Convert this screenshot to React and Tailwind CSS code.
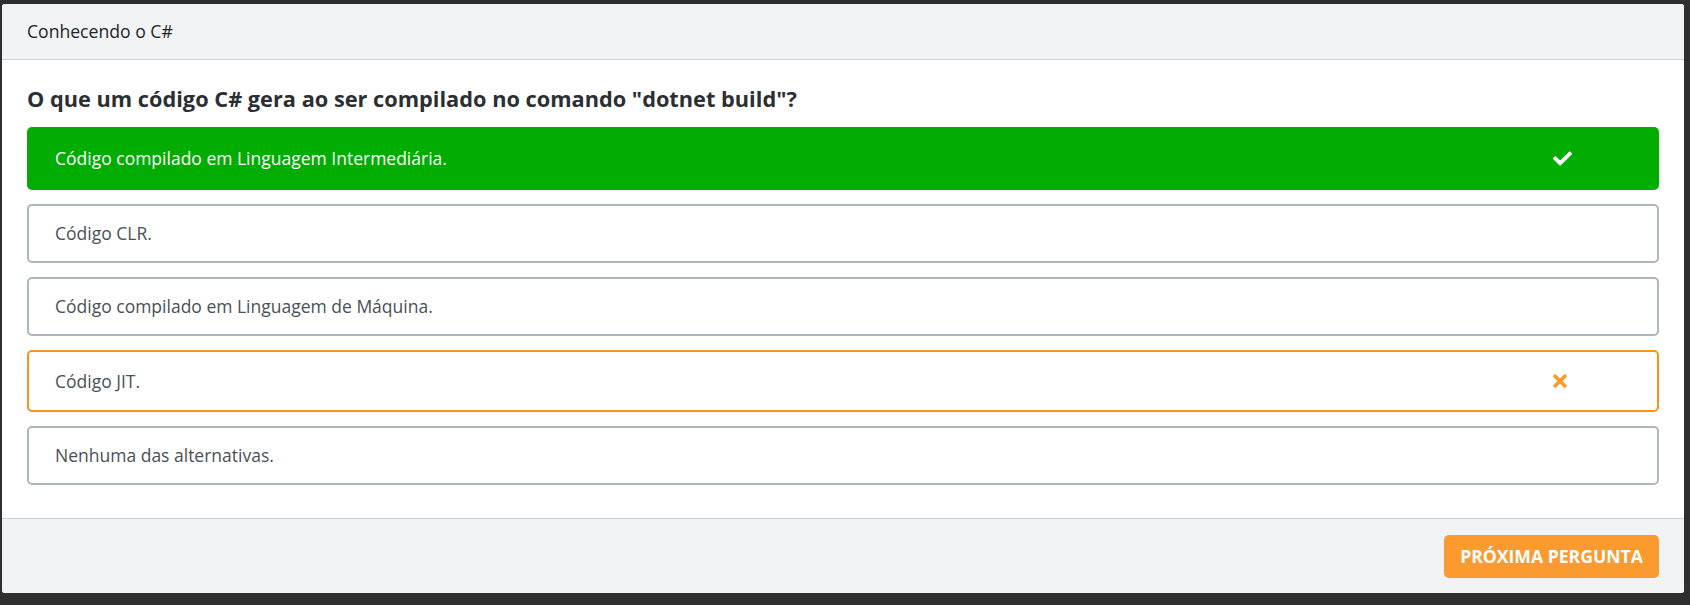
import { FaCheck, FaTimes } from 'react-icons/fa';

const options = [
  { id: 1, text: 'Código compilado em Linguagem Intermediária.', state: 'correct' },
  { id: 2, text: 'Código CLR.', state: 'idle' },
  { id: 3, text: 'Código compilado em Linguagem de Máquina.', state: 'idle' },
  { id: 4, text: 'Código JIT.', state: 'wrong' },
  { id: 5, text: 'Nenhuma das alternativas.', state: 'idle' },
];

function Option({ option }) {
  if (option.state === 'correct') {
    return (
      <div className="h-[63px] rounded-[5px] bg-[#00ad00] pl-[28px] flex items-center justify-between text-white">
        <span>{option.text}</span>
        <span className="w-[40px] mr-[77px] flex justify-center">
          <FaCheck className="w-[19px] h-[19px]" />
        </span>
      </div>
    );
  }
  if (option.state === 'wrong') {
    return (
      <div className="h-[62px] rounded-[5px] border-2 border-[#f7931e] bg-white pl-[26px] flex items-center justify-between text-[#495057]">
        <span>{option.text}</span>
        <span className="w-[40px] mr-[77px] flex justify-center text-[#fb9a2e]">
          <FaTimes className="w-[20px] h-[20px]" />
        </span>
      </div>
    );
  }
  return (
    <div className="h-[59px] rounded-[5px] border-2 border-[#adb5bd] bg-white pl-[26px] flex items-center text-[#495057]">
      <span>{option.text}</span>
    </div>
  );
}

export default function App() {
  return (
    <div
      className="h-[605px] bg-[#2f2f2f] pt-[4px] pl-[2px] pr-[6px] pb-[12px]"
      style={{ fontFamily: '"Open Sans", sans-serif' }}
    >
      <div className="h-full bg-white rounded-[3px] overflow-hidden flex flex-col">
        {/* Header */}
        <div className="h-[56px] shrink-0 bg-[#f2f3f5] border-b border-[#cdd1d5] px-[25px] flex items-center text-[17.6px] text-[#212529]">
          Conhecendo o C#
        </div>

        {/* Question */}
        <div className="px-[25px] pt-[25px] pb-[33px]">
          <h1 className="text-[21.75px] leading-[28px] font-bold text-[#2b2f33] mb-[14px]">
            O que um código C# gera ao ser compilado no comando "dotnet build"?
          </h1>
          <div className="flex flex-col gap-[14px] text-[17.5px]">
            {options.map((o) => (
              <Option key={o.id} option={o} />
            ))}
          </div>
        </div>

        {/* Footer */}
        <div className="flex-1 bg-[#f2f3f5] border-t border-[#cdd1d5] px-[25px] flex items-center justify-end">
          <button className="h-[43px] w-[215px] rounded-[5px] bg-[#fb9a2e] text-white font-bold text-[17.6px] uppercase">
            Próxima pergunta
          </button>
        </div>
      </div>
    </div>
  );
}
